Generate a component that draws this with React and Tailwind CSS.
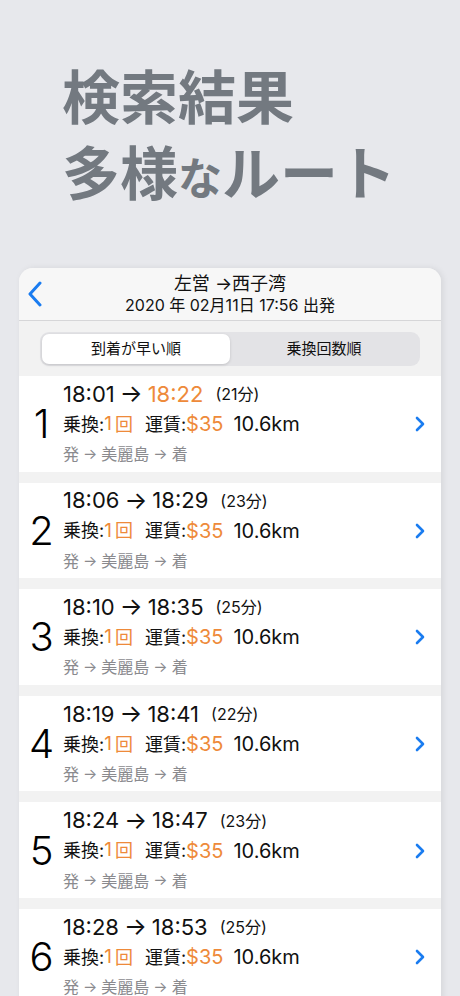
const routes = [
  { n: 1, dep: '18:01', arr: '18:22', mins: '21分', hl: true },
  { n: 2, dep: '18:06', arr: '18:29', mins: '23分' },
  { n: 3, dep: '18:10', arr: '18:35', mins: '25分' },
  { n: 4, dep: '18:19', arr: '18:41', mins: '22分' },
  { n: 5, dep: '18:24', arr: '18:47', mins: '23分' },
  { n: 6, dep: '18:28', arr: '18:53', mins: '25分' },
]

function RouteRow({ route }) {
  return (
    <div className="flex items-center h-[95.6px] bg-white pt-[1px]">
      <div className="w-[44px] text-center text-[40px] leading-none font-light text-black pl-[1px]">
        {route.n}
      </div>
      <div className="flex-1 flex flex-col">
        <div className="h-[30px] flex items-center text-[22px] text-[#111]">
          <span>{route.dep}</span>
          <span className="mx-[5px] text-[24px] leading-none">→</span>
          <span className={route.hl ? 'text-[#ee8a3a]' : ''}>{route.arr}</span>
          <span className="ml-[12px] text-[16px]">({route.mins})</span>
        </div>
        <div className="h-[30px] flex items-center text-[18px] text-[#111]">
          <span>乗換:</span>
          <span className="text-[#ee8a3a] text-[19px]">1</span>
          <span className="text-[#ee8a3a] ml-[3px]">回</span>
          <span className="ml-[12px]">運賃:</span>
          <span className="text-[#ee8a3a] text-[20px]">$35</span>
          <span className="ml-[10px] text-[20px]">10.6km</span>
        </div>
        <div className="h-[30px] flex items-center text-[16px] text-[#8a8a8e]">
          <span>発</span>
          <span className="mx-[4px] text-[15px]">→</span>
          <span>美麗島</span>
          <span className="mx-[4px] text-[15px]">→</span>
          <span>着</span>
        </div>
      </div>
      <svg width="12" height="16" viewBox="0 0 12 16" className="mr-[15px]">
        <polyline points="3,2 9,8 3,14" fill="none" stroke="#1a7cf0" strokeWidth="2.6" strokeLinecap="round" strokeLinejoin="round" />
      </svg>
    </div>
  )
}

export default function App() {
  return (
    <div
      className="h-[996px] w-[460px] overflow-hidden bg-[#e7e8ec]"
      style={{ fontFamily: 'Inter, "Noto Sans CJK JP", sans-serif' }}
    >
      {/* headline */}
      <div
        className="pt-[56px] pl-[62px] text-[#737980] font-bold leading-[76px] text-[58px]"
        style={{ fontFamily: '"Noto Sans CJK JP", sans-serif' }}
      >
        <div>検索結果</div>
        <div>
          多様<span className="text-[44px]">な</span>ルート
        </div>
      </div>

      {/* phone screen */}
      <div className="mt-[54px] mx-[19px] rounded-t-[14px] bg-[#f2f2f2] overflow-hidden shadow-[2px_0_6px_rgba(0,0,0,0.08)]">
        <div className="relative h-[53px] bg-[#f7f7f7] border-b border-[#d6d6d8] flex flex-col items-center justify-center">
          <svg width="16" height="28" viewBox="0 0 16 28" className="absolute left-[8px] top-[13px]">
            <polyline points="13,2 3,13 13,24" fill="none" stroke="#1a7cf0" strokeWidth="3" strokeLinecap="round" strokeLinejoin="round" />
          </svg>
          <div className="text-[18px] leading-[22px] text-[#111]">左営 →西子湾</div>
          <div className="text-[16px] leading-[20px] text-[#111]">2020 年 02月11日 17:56 出発</div>
        </div>

        <div className="pt-[11px] pb-[10px] px-[21px]">
          <div className="h-[34px] rounded-[9px] bg-[#e3e3e6] p-[2px] flex">
            <div className="flex-1 rounded-[7px] bg-white shadow-[0_1px_3px_rgba(0,0,0,0.15)] flex items-center justify-center text-[15px] text-[#111]">
              到着が早い順
            </div>
            <div className="flex-1 flex items-center justify-center text-[15px] text-[#111]">
              乗換回数順
            </div>
          </div>
        </div>

        <div className="flex flex-col gap-[11px] pb-[20px]">
          {routes.map((r) => (
            <RouteRow key={r.n} route={r} />
          ))}
        </div>
      </div>
    </div>
  )
}
